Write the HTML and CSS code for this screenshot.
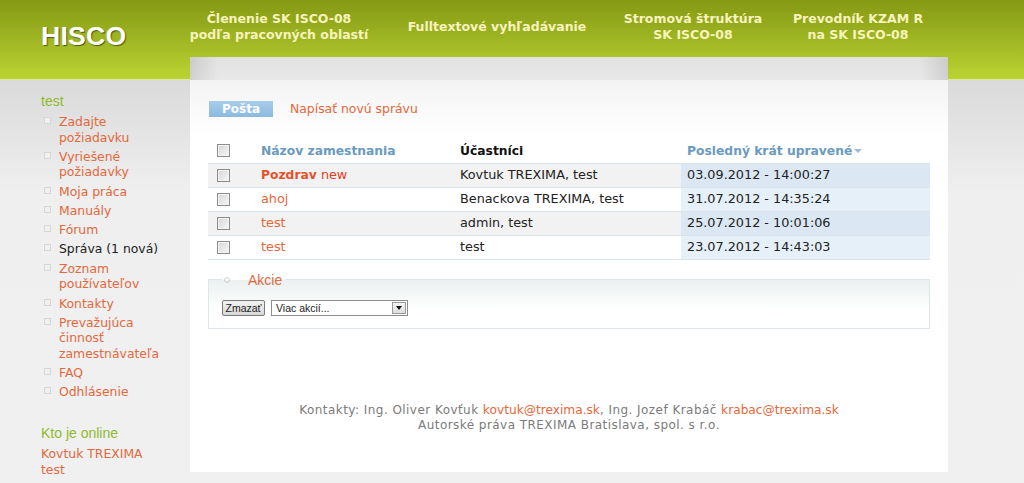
FILE: index.html
```html
<!DOCTYPE html>
<html lang="sk">
<head>
<meta charset="utf-8">
<title>HISCO</title>
<link rel="stylesheet" href="styles.css">
</head>
<body>
<header class="top">
  <div class="logo">HISCO</div>
  <nav class="menu">
    <a class="menu-item mi-1" href="#">Členenie SK ISCO-08<br>podľa pracovných oblastí</a>
    <a class="menu-item mi-2" href="#">Fulltextové vyhľadávanie</a>
    <a class="menu-item mi-3" href="#">Stromová štruktúra<br>SK ISCO-08</a>
    <a class="menu-item mi-4" href="#">Prevodník KZAM R<br>na SK ISCO-08</a>
  </nav>
</header>
<div class="page-row">
  <aside class="side">
    <h2 class="side-title">test</h2>
    <ul class="side-menu">
      <li><a href="#">Zadajte požiadavku</a></li>
      <li><a href="#">Vyriešené požiadavky</a></li>
      <li><a href="#">Moja práca</a></li>
      <li><a href="#">Manuály</a></li>
      <li><a href="#">Fórum</a></li>
      <li><a class="current" href="#">Správa (1 nová)</a></li>
      <li><a href="#">Zoznam používateľov</a></li>
      <li><a href="#">Kontakty</a></li>
      <li><a href="#">Prevažujúca činnosť zamestnávateľa</a></li>
      <li><a href="#">FAQ</a></li>
      <li><a href="#">Odhlásenie</a></li>
    </ul>
    <h2 class="side-title online-title">Kto je online</h2>
    <div class="online">
      <a href="#">Kovtuk TREXIMA</a>
      <a href="#">test</a>
    </div>
  </aside>
  <main class="panel">
    <div class="panel-top"></div>
    <div class="panel-body">
      <div class="tabs">
        <span class="tab active">Pošta</span>
        <a class="tab-link" href="#">Napísať novú správu</a>
      </div>
      <table class="mail">
        <thead>
          <tr>
            <th class="c-check"><input type="checkbox" class="cb"></th>
            <th class="c-name"><a class="sort" href="#">Názov zamestnania</a></th>
            <th class="c-part">Účastníci</th>
            <th class="c-date"><a class="sort" href="#">Posledný krát upravené</a><span class="arrow"></span></th>
          </tr>
        </thead>
        <tbody>
          <tr class="odd">
            <td class="c-check"><input type="checkbox" class="cb"></td>
            <td class="c-name"><a class="subj unread" href="#">Pozdrav</a> <span class="new">new</span></td>
            <td class="c-part">Kovtuk TREXIMA, test</td>
            <td class="c-date">03.09.2012 - 14:00:27</td>
          </tr>
          <tr class="even">
            <td class="c-check"><input type="checkbox" class="cb"></td>
            <td class="c-name"><a class="subj" href="#">ahoj</a></td>
            <td class="c-part">Benackova TREXIMA, test</td>
            <td class="c-date">31.07.2012 - 14:35:24</td>
          </tr>
          <tr class="odd">
            <td class="c-check"><input type="checkbox" class="cb"></td>
            <td class="c-name"><a class="subj" href="#">test</a></td>
            <td class="c-part">admin, test</td>
            <td class="c-date">25.07.2012 - 10:01:06</td>
          </tr>
          <tr class="even">
            <td class="c-check"><input type="checkbox" class="cb"></td>
            <td class="c-name"><a class="subj" href="#">test</a></td>
            <td class="c-part">test</td>
            <td class="c-date">23.07.2012 - 14:43:03</td>
          </tr>
        </tbody>
      </table>
      <fieldset class="actions">
        <legend class="actions-legend"><span class="ring"></span>Akcie</legend>
        <div class="actions-row">
          <button class="btn" type="button">Zmazať</button>
          <div class="select">
            <span class="select-text">Viac akcií...</span>
            <span class="select-btn"><span class="select-tri"></span></span>
          </div>
        </div>
      </fieldset>
      <footer class="foot">
        <p>Kontakty: Ing. Oliver Kovťuk <a href="#">kovtuk@trexima.sk</a>, Ing. Jozef Krabáč <a href="#">krabac@trexima.sk</a></p>
        <p>Autorské práva TREXIMA Bratislava, spol. s r.o.</p>
      </footer>
    </div>
  </main>
</div>
</body>
</html>
```
FILE: styles.css
```css
* { box-sizing: border-box; }
html, body { margin: 0; padding: 0; }
body {
  background: #f0f0f0;
  font-family: "DejaVu Sans", Verdana, sans-serif;
  color: #333;
  width: 1024px;
  height: 483px;
  overflow: hidden;
}
a { text-decoration: none; }

/* header */
.top {
  height: 80px;
  display: flex;
  background: linear-gradient(#859913 0%, #9cb322 45%, #bcd431 100%);
  border-bottom: 1px solid #dfe8a0;
}
.logo {
  width: 180px;
  padding: 21px 0 0 41px;
  font-family: "Liberation Sans", Arial, sans-serif;
  font-weight: bold;
  font-size: 26.5px;
  line-height: 30px;
  color: #fff;
  text-shadow: 1px 1px 1px #4d5a10;
  letter-spacing: 0.3px;
}
.menu {
  display: flex;
  height: 54px;
  align-items: center;
}
.menu-item {
  display: block;
  text-align: center;
  color: #f7f3bd;
  font-weight: bold;
  font-size: 12.5px;
  line-height: 16px;
}
.mi-1 { width: 198px; }
.mi-2 { width: 238px; }
.mi-3 { width: 154px; }
.mi-4 { width: 176px; }

/* body row */
.page-row {
  display: flex;
  align-items: flex-start;
  height: 403px;
  background: linear-gradient(#dadada, #efefef 110px, #f0f0f0);
}

/* sidebar */
.side {
  width: 190px;
  flex: none;
  padding: 12px 0 0 41px;
}
.side-title {
  margin: 0 0 4px 0;
  font-family: "Liberation Sans", Arial, sans-serif;
  font-weight: normal;
  font-size: 14px;
  line-height: 18px;
  color: #8fba2c;
}
.side-menu {
  list-style: none;
  margin: 0;
  padding: 0 0 0 18px;
  width: 135px;
}
.side-menu li {
  position: relative;
  font-size: 12.4px;
  line-height: 15.5px;
  margin-bottom: 3.8px;
}
.side-menu li::before {
  content: "";
  position: absolute;
  left: -15px;
  top: 3px;
  width: 5px;
  height: 5px;
  border: 1px solid #d6d6d6;
  background: #f0f0f0;
}
.side-menu a { color: #e4683b; }
.side-menu a.current { color: #222; }
.online-title { margin-top: 24px; }
.online a {
  display: block;
  color: #e4683b;
  font-size: 12.4px;
  line-height: 16px;
}

/* panel */
.panel {
  width: 758px;
  flex: none;
  margin-top: -23px;
  height: 415px;
  background: #fff;
  position: relative;
}
.panel-top {
  height: 23px;
  background:
    linear-gradient(to right, rgba(0,0,0,0.10), rgba(0,0,0,0) 28px, rgba(0,0,0,0) calc(100% - 28px), rgba(0,0,0,0.10)),
    linear-gradient(#e2e2e2, #e8e8e8);
}
.panel-body {
  padding: 21px 18px 0 18px;
  background: linear-gradient(#f3f3f3, #ffffff 55px);
  height: 392px;
}

.tabs {
  display: flex;
  align-items: center;
  height: 16px;
  gap: 17px;
}
.tab.active {
  display: block;
  width: 64px;
  height: 16px;
  margin-left: 1px;
  background: linear-gradient(#a8cdea, #8bbadf);
  color: #fff;
  font-weight: bold;
  font-size: 12px;
  line-height: 16px;
  text-align: center;
}
.tab-link {
  color: #e4683b;
  font-size: 12.4px;
  line-height: 16px;
}

/* table */
.mail {
  width: 100%;
  margin-top: 22px;
  border-collapse: collapse;
  font-size: 12.8px;
}
.mail th, .mail td {
  height: 24px;
  padding: 0;
  text-align: left;
  vertical-align: middle;
  border-bottom: 1px solid #d9e3ea;
  line-height: 16px;
}
.mail th {
  font-weight: bold;
  font-size: 12.3px;
  color: #111;
  height: 24px;
}
.c-check { width: 45px; padding-left: 9px !important; }
.c-name { width: 199px; padding-left: 8px !important; }
.c-part { width: 229px; padding-left: 8px !important; }
.c-date { padding-left: 6px !important; }
.mail td.c-check, .mail th.c-check { line-height: 0; }
.sort { color: #6b9ac0; }
.arrow {
  display: inline-block;
  width: 0;
  height: 0;
  margin-left: 2px;
  border-left: 4px solid transparent;
  border-right: 4px solid transparent;
  border-top: 4px solid #9dbcd6;
  vertical-align: middle;
}
.mail tr.odd td { background: #f2f2f2; }
.mail tr.even td { background: #fff; }
.mail tr.odd td.c-date { background: #dbe8f3; }
.mail tr.even td.c-date { background: #e6f0f8; }
.mail td.c-part, .mail td.c-date { color: #222; }
.subj { color: #e4683b; }
.subj.unread { color: #e4512a; font-weight: bold; font-size: 12.3px; }
.new { color: #e43c1c; }

.cb {
  appearance: none;
  -webkit-appearance: none;
  margin: 0;
  width: 13px;
  height: 13px;
  border: 1px solid #8c8c8c;
  background: linear-gradient(135deg, #d6d6d6, #f7f7f7);
  box-shadow: inset 0 0 0 1px #f4f4f4;
  vertical-align: middle;
}

/* actions */
.actions {
  margin: 12px 0 0 0;
  padding: 12px 13px 12px 13px;
  border: 1px solid #dce7ec;
  background: linear-gradient(#ecf0f1, #ffffff 30px);
  min-width: 0;
}
.actions-legend {
  padding: 0 3px 0 2px;
  font-family: "Liberation Sans", Arial, sans-serif;
  font-size: 14px;
  line-height: 16px;
  color: #e4683b;
}
.ring {
  display: inline-block;
  width: 6px;
  height: 6px;
  border: 1px solid #cfcfcf;
  border-radius: 50%;
  margin-right: 18px;
  vertical-align: middle;
  position: relative;
  top: -1px;
}
.actions-row {
  display: flex;
  align-items: center;
  gap: 6px;
}
.btn {
  margin: 0;
  height: 16px;
  width: 43px;
  padding: 0;
  border: 1px solid #7a7a7a;
  border-radius: 2px;
  background: linear-gradient(#f3f3f3, #d8d8d8);
  font-family: "Liberation Sans", Arial, sans-serif;
  font-size: 10.5px;
  line-height: 14px;
  color: #222;
}
.select {
  display: flex;
  align-items: center;
  width: 137px;
  height: 16px;
  border: 1px solid #8c8c8c;
  background: #fff;
  padding-left: 4px;
}
.select-text {
  flex: 1;
  font-family: "Liberation Sans", Arial, sans-serif;
  font-size: 10.5px;
  color: #222;
  line-height: 14px;
}
.select-btn {
  width: 14px;
  height: 12px;
  margin-right: 1px;
  border: 1px solid #9a9a9a;
  background: linear-gradient(#f6f6f6, #dcdcdc);
  display: flex;
  align-items: center;
  justify-content: center;
}
.select-tri {
  width: 0;
  height: 0;
  border-left: 3.5px solid transparent;
  border-right: 3.5px solid transparent;
  border-top: 4px solid #111;
}

/* footer */
.foot {
  margin-top: 74px;
  text-align: center;
  color: #7b7b7b;
  font-size: 12px;
  letter-spacing: 0.45px;
  line-height: 15px;
}
.foot p { margin: 0; }
.foot a { color: #e4683b; font-size: 12.2px; letter-spacing: 0; }
```
